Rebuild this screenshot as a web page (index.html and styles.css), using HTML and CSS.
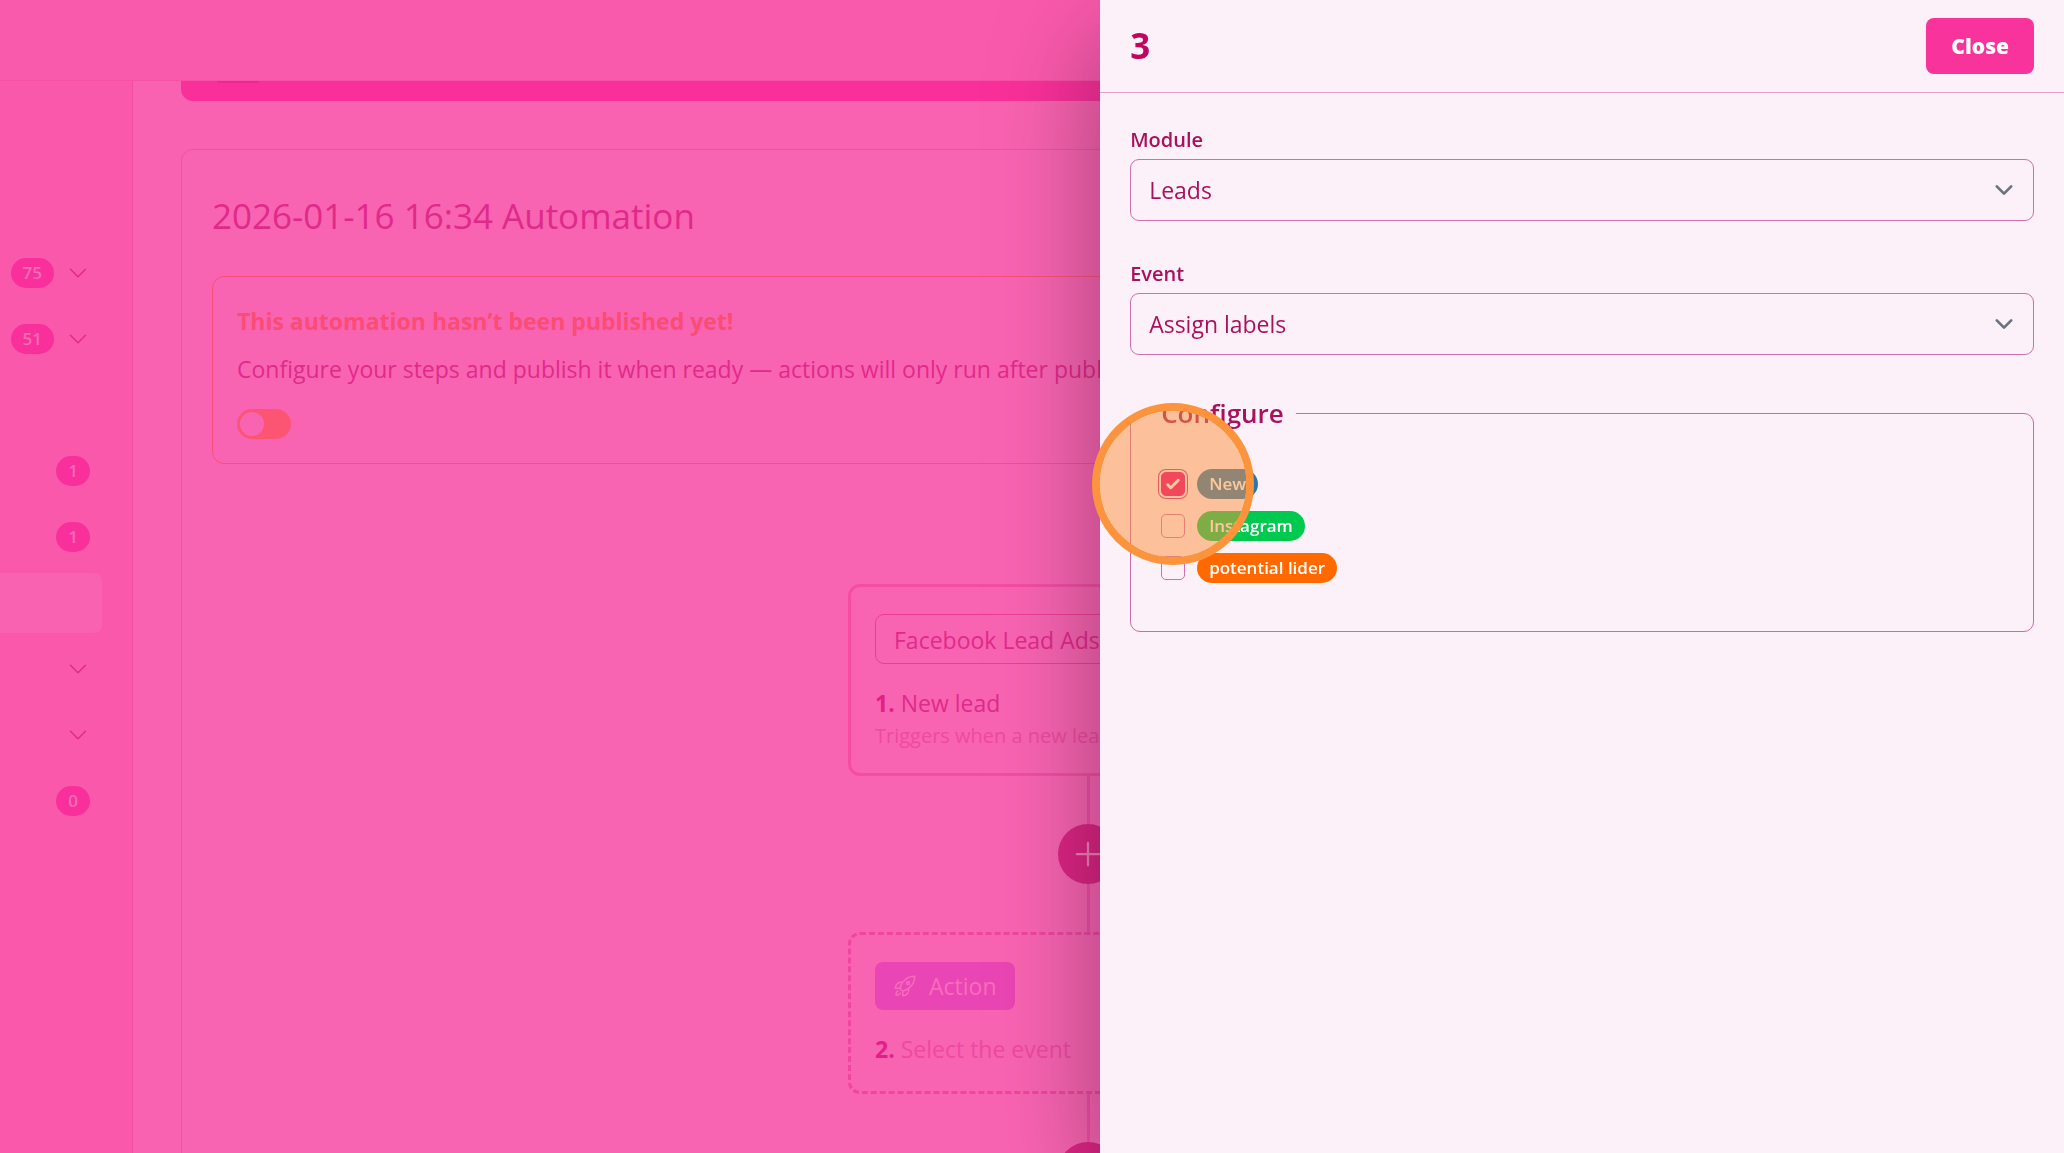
FILE: index.html
```html
<!DOCTYPE html>
<html lang="en">
<head>
  <meta charset="UTF-8">
  <meta name="viewport" content="width=device-width, initial-scale=1">
  <title>Automation</title>
  <link rel="stylesheet" href="styles.css">
</head>
<body>

  <div class="app">
    <header class="topbar"></header>

    <div class="layout">
      <!-- Sidebar -->
      <nav class="sidebar">
        <a href="#" class="nav-item">
          <span class="count">75</span>
          <svg class="chevron" viewBox="0 0 24 24"><path d="m19.5 8.25-7.5 7.5-7.5-7.5"/></svg>
        </a>
        <a href="#" class="nav-item">
          <span class="count">51</span>
          <svg class="chevron" viewBox="0 0 24 24"><path d="m19.5 8.25-7.5 7.5-7.5-7.5"/></svg>
        </a>
        <a href="#" class="nav-item"></a>
        <a href="#" class="nav-item"><span class="count">1</span></a>
        <a href="#" class="nav-item"><span class="count">1</span></a>
        <a href="#" class="nav-item active"></a>
        <a href="#" class="nav-item">
          <svg class="chevron" viewBox="0 0 24 24"><path d="m19.5 8.25-7.5 7.5-7.5-7.5"/></svg>
        </a>
        <a href="#" class="nav-item">
          <svg class="chevron" viewBox="0 0 24 24"><path d="m19.5 8.25-7.5 7.5-7.5-7.5"/></svg>
        </a>
        <a href="#" class="nav-item"><span class="count">0</span></a>
      </nav>

      <!-- Automation -->
      <main class="main">
        <div class="banner"><span class="banner-mark"></span></div>

        <section class="card">
          <h1 class="card-title">2026-01-16 16:34 Automation</h1>

          <div class="alert">
            <h2 class="alert-title">This automation hasn’t been published yet!</h2>
            <p class="alert-text">Configure your steps and publish it when ready — actions will only run after publishing.</p>
            <input type="checkbox" class="toggle" aria-label="Publish automation">
          </div>

          <div class="flow">
            <article class="node">
              <div class="source">Facebook Lead Ads</div>
              <p class="step"><strong>1.</strong> New lead</p>
              <p class="step-note">Triggers when a new lead is received</p>
            </article>
            <div class="line"></div>
            <button class="add" aria-label="Add step">
              <svg viewBox="0 0 24 24"><path d="M12 4.5v15m7.5-7.5h-15"/></svg>
            </button>
            <div class="line"></div>
            <article class="node dashed">
              <button class="action">
                <svg viewBox="0 0 24 24"><path d="M15.59 14.37a6 6 0 0 1-5.84 7.38v-4.8m5.84-2.58a14.98 14.98 0 0 0 6.16-12.12A14.98 14.98 0 0 0 9.631 8.41m5.96 5.96a14.926 14.926 0 0 1-5.841 2.58m-.119-8.54a6 6 0 0 0-7.381 5.84h4.8m2.581-5.84a14.927 14.927 0 0 0-2.58 5.84m2.699 2.7c-.103.021-.207.041-.311.06a15.09 15.09 0 0 1-2.448-2.448 14.9 14.9 0 0 1 .06-.312m-2.24 2.39a4.493 4.493 0 0 0-1.757 4.306 4.493 4.493 0 0 0 4.306-1.758M16.5 9a1.5 1.5 0 1 1-3 0 1.5 1.5 0 0 1 3 0Z"/></svg>
                Action
              </button>
              <p class="step muted"><strong>2.</strong> Select the event</p>
            </article>
            <div class="line"></div>
            <button class="add" aria-label="Add step">
              <svg viewBox="0 0 24 24"><path d="M12 4.5v15m7.5-7.5h-15"/></svg>
            </button>
          </div>
        </section>
      </main>
    </div>
  </div>

  <!-- Step settings -->
  <aside class="drawer">
    <header class="drawer-header">
      <h2 class="drawer-title">3</h2>
      <button class="close">Close</button>
    </header>

    <form class="drawer-body">
      <div class="field">
        <label for="module">Module</label>
        <div class="select">
          <select id="module"><option>Leads</option></select>
          <svg viewBox="0 0 20 20"><path d="m6 8 4 4 4-4"/></svg>
        </div>
      </div>

      <div class="field">
        <label for="event">Event</label>
        <div class="select">
          <select id="event"><option>Assign labels</option></select>
          <svg viewBox="0 0 20 20"><path d="m6 8 4 4 4-4"/></svg>
        </div>
      </div>

      <fieldset class="configure">
        <legend>Configure</legend>
        <div class="options">
          <label class="option">
            <span class="check">
              <input type="checkbox" class="focused" checked>
              <svg viewBox="0 0 16 16"><path d="M12.207 4.793a1 1 0 0 1 0 1.414l-5 5a1 1 0 0 1-1.414 0l-2-2a1 1 0 0 1 1.414-1.414L6.5 9.086l4.293-4.293a1 1 0 0 1 1.414 0z"/></svg>
              <span class="click-marker"></span>
            </span>
            <span class="tag blue">New</span>
          </label>
          <label class="option">
            <span class="check"><input type="checkbox"></span>
            <span class="tag green">Instagram</span>
          </label>
          <label class="option">
            <span class="check"><input type="checkbox"></span>
            <span class="tag orange">potential lider</span>
          </label>
        </div>
      </fieldset>
    </form>
  </aside>

</body>
</html>
```
FILE: styles.css
```css
* {
  box-sizing: border-box;
}

body {
  margin: 0;
  font-family: "Open Sans", "Noto Sans", sans-serif;
  font-size: 23px;
  color: #e02a8a;
  background: #f962b0;
  overflow: hidden;
}

h1, h2, p {
  margin: 0;
}

button, select, input {
  font: inherit;
  margin: 0;
}

svg {
  display: block;
  fill: none;
  stroke: currentColor;
  stroke-width: 1.5;
  stroke-linecap: round;
  stroke-linejoin: round;
}

.app {
  display: flex;
  flex-direction: column;
  height: 100vh;
  overflow: hidden;
}

.topbar {
  flex: 0 0 81px;
  background: #fa5aac;
  border-bottom: 1px solid #f850a4;
}

.layout {
  display: flex;
  flex: 1;
  min-height: 0;
}

/* Sidebar */
.sidebar {
  display: flex;
  flex-direction: column;
  gap: 6px;
  flex: 0 0 133px;
  padding: 162px 30px 0 0;
  background: #fa59ab;
  border-right: 1px solid #f34ea2;
}

.nav-item {
  display: flex;
  align-items: center;
  justify-content: flex-end;
  gap: 12px;
  flex: 0 0 60px;
  padding-right: 12px;
  border-radius: 0 8px 8px 0;
  color: #e02a8a;
  text-decoration: none;
}

.nav-item.active {
  background: #f962b0;
}

.count {
  padding: 0 12px;
  border-radius: 15px;
  background: #f9309c;
  color: #fa6cb7;
  font-size: 17px;
  font-weight: 600;
  line-height: 30px;
}

.chevron {
  width: 24px;
  height: 24px;
}

/* Main content */
.main {
  flex: 1;
  min-width: 0;
  padding: 0 69px 0 48px;
}

.banner {
  height: 20px;
  padding-left: 36px;
  border-radius: 0 0 12px 12px;
  background: #f9309a;
}

.banner-mark {
  display: block;
  width: 42px;
  height: 2px;
  border-radius: 0 0 4px 4px;
  background: #ef2690;
}

.card {
  margin-top: 48px;
  padding: 30px;
  border: 1px solid #f54fa5;
  border-radius: 12px;
  background: #f964b2;
}

.card-title {
  margin-bottom: 24px;
  font-size: 35px;
  font-weight: 400;
  line-height: 72px;
}

.alert {
  padding: 24px;
  border: 1px solid #f94f7e;
  border-radius: 12px;
}

.alert-title {
  color: #fb4c74;
  font-size: 23px;
  font-weight: 700;
  line-height: 40px;
}

.alert-text {
  margin: 10px 0 22px;
  line-height: 36px;
  white-space: nowrap;
}

.toggle {
  appearance: none;
  display: flex;
  align-items: center;
  width: 54px;
  height: 30px;
  padding: 3px;
  border-radius: 15px;
  background: #fc5573;
}

.toggle::before {
  content: "";
  width: 24px;
  height: 24px;
  border-radius: 50%;
  background: #f964b2;
}

/* Flow */
.flow {
  display: flex;
  flex-direction: column;
  align-items: center;
  margin-top: 120px;
}

.node {
  width: 480px;
  padding: 27px 24px 22px;
  border: 3px solid #f54da4;
  border-radius: 12px;
}

.node.dashed {
  padding-bottom: 24px;
  border-style: dashed;
  border-color: #f0469f;
}

.source {
  height: 50px;
  padding: 0 18px;
  border: 1px solid #f03c98;
  border-radius: 9px;
  line-height: 50px;
}

.step {
  margin-top: 21px;
  line-height: 36px;
}

.step.muted {
  color: #ee4aa0;
}

.step strong {
  color: #e2208a;
}

.step-note {
  color: #ee4aa0;
  font-size: 20px;
  line-height: 30px;
}

.line {
  width: 3px;
  height: 48px;
  background: #f24fa5;
}

.add {
  display: flex;
  align-items: center;
  justify-content: center;
  flex: 0 0 60px;
  width: 60px;
  padding: 0;
  border: none;
  border-radius: 50%;
  background: #dd2584;
  color: #f77cbb;
}

.add svg {
  width: 36px;
  height: 36px;
}

.action {
  display: flex;
  align-items: center;
  gap: 12px;
  height: 48px;
  padding: 0 18px;
  border: none;
  border-radius: 8px;
  background: #ea45b4;
  color: #f96cbb;
}

.action svg {
  width: 24px;
  height: 24px;
}

/* Drawer */
.drawer {
  position: fixed;
  top: 0;
  right: 0;
  bottom: 0;
  width: 46.7%;
  background: #fcf1f8;
  color: #a8125c;
  box-shadow: 0 38px 100px rgba(0, 0, 0, 0.35);
}

.drawer-header {
  display: flex;
  align-items: center;
  justify-content: space-between;
  padding: 18px 30px;
  border-bottom: 1px solid #e5a3ca;
}

.drawer-title {
  color: #c0055f;
  font-size: 35px;
  font-weight: 700;
  line-height: 56px;
}

.close {
  height: 56px;
  padding: 0 25px;
  border: none;
  border-radius: 8px;
  background: #f8339b;
  color: #fff;
  font-size: 21px;
  font-weight: 800;
}

.drawer-body {
  display: flex;
  flex-direction: column;
  gap: 36px;
  padding: 30px;
}

.field {
  display: flex;
  flex-direction: column;
  gap: 2px;
}

.field label {
  font-size: 20px;
  font-weight: 600;
  line-height: 34px;
}

.select {
  display: grid;
  align-items: center;
}

.select > * {
  grid-area: 1 / 1;
}

.select select {
  appearance: none;
  width: 100%;
  height: 62px;
  padding: 0 18px;
  border: 1px solid #cf6fae;
  border-radius: 9px;
  background: transparent;
  color: inherit;
}

.select svg {
  justify-self: end;
  width: 36px;
  height: 36px;
  margin-right: 12px;
  color: #6b7280;
  pointer-events: none;
}

.configure {
  min-width: 0;
  margin: 4px 0 0;
  padding: 38px 30px 48px;
  border: 1px solid #c86cab;
  border-radius: 10px;
}

.configure legend {
  margin-left: -12px;
  padding: 0 12px;
  font-size: 26px;
  font-weight: 600;
  line-height: 36px;
}

.options {
  display: flex;
  flex-direction: column;
  gap: 12px;
}

.option {
  display: flex;
  align-items: center;
  gap: 12px;
}

.check {
  display: grid;
  place-items: center;
  position: relative;
}

.check > input,
.check > svg {
  grid-area: 1 / 1;
}

.check input {
  appearance: none;
  width: 24px;
  height: 24px;
  border: 1px solid #cf6fae;
  border-radius: 5px;
}

.check input:checked {
  border-color: #e6007a;
  background: #e6007a;
}

.check .focused {
  box-shadow: 0 0 0 2px #fcf1f8, 0 0 0 3px #c8288c;
}

.check svg {
  z-index: 1;
  width: 24px;
  height: 24px;
  fill: #fff;
  stroke: none;
}

.tag {
  padding: 0 12px;
  border-radius: 15px;
  color: #fff;
  font-size: 17px;
  font-weight: 600;
  line-height: 30px;
}

.blue {
  background: #2878ac;
}

.green {
  background: #00c950;
}

.orange {
  background: #ff6900;
}

/* Ring drawn over the clicked checkbox */
.click-marker {
  position: absolute;
  z-index: 2;
  top: 50%;
  left: 50%;
  width: 162px;
  height: 162px;
  border: 8px solid #fb943c;
  border-radius: 50%;
  background: rgba(251, 146, 60, 0.5);
  background-clip: padding-box;
  transform: translate(-50%, -50%);
  pointer-events: none;
}
```
